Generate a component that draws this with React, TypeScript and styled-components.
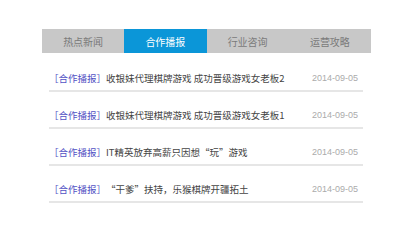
import React from "react";
import styled, { createGlobalStyle } from "styled-components";

const GlobalStyle = createGlobalStyle`
  html, body {
    margin: 0;
    padding: 0;
    background: #fff;
  }
  body {
    font-family: "Noto Sans CJK SC", "Liberation Sans", sans-serif;
  }
`;

const tabs = ["热点新闻", "合作播报", "行业咨询", "运营攻略"];

const news = [
  { title: "收银妹代理棋牌游戏 成功晋级游戏女老板2", date: "2014-09-05" },
  { title: "收银妹代理棋牌游戏 成功晋级游戏女老板1", date: "2014-09-05" },
  { title: "IT精英放弃高薪只因想“玩”游戏", date: "2014-09-05" },
  { title: "“干爹”扶持，乐猴棋牌开疆拓土", date: "2014-09-05" }
];

const App = () => {
  const active = 1;
  return (
    <>
      <GlobalStyle />
      <Wrapper>
        <TabBar>
          {tabs.map((t, i) => (
            <Tab key={t} active={i === active}>
              {t}
            </Tab>
          ))}
        </TabBar>
        <List>
          {news.map((n, i) => (
            <Row key={i}>
              <Tag>［合作播报］</Tag>
              <Title>{n.title}</Title>
              <DateText>{n.date}</DateText>
            </Row>
          ))}
        </List>
      </Wrapper>
    </>
  );
};

const Wrapper = styled.div`
  padding: 29px 44px 0 42px;
  width: 329px;
`;

const TabBar = styled.div`
  display: grid;
  grid-template-columns: repeat(4, 1fr);
  height: 24px;
  background: #c8c8c8;
`;

const Tab = styled.div<{ active?: boolean }>`
  display: flex;
  align-items: center;
  justify-content: center;
  font-size: 10px;
  color: ${(p) => (p.active ? "#fff" : "#7a7a7a")};
  background: ${(p) => (p.active ? "#0b96d8" : "transparent")};
`;

const List = styled.ul`
  list-style: none;
  margin: 2px 8px 0 7px;
  padding: 0;
`;

const Row = styled.li`
  display: flex;
  align-items: center;
  height: 14px;
  padding: 16px 5px 5px 0;
  border-bottom: 2px solid #e6e6e6;
  font-size: 9.5px;
  line-height: 14px;
`;

const Tag = styled.span`
  color: #5252c4;
`;

const Title = styled.span`
  flex: 1;
  color: #444;
  white-space: nowrap;
`;

const DateText = styled.span`
  color: #ababab;
  font-family: "Liberation Sans", sans-serif;
  font-size: 9px;
`;

export default App;
